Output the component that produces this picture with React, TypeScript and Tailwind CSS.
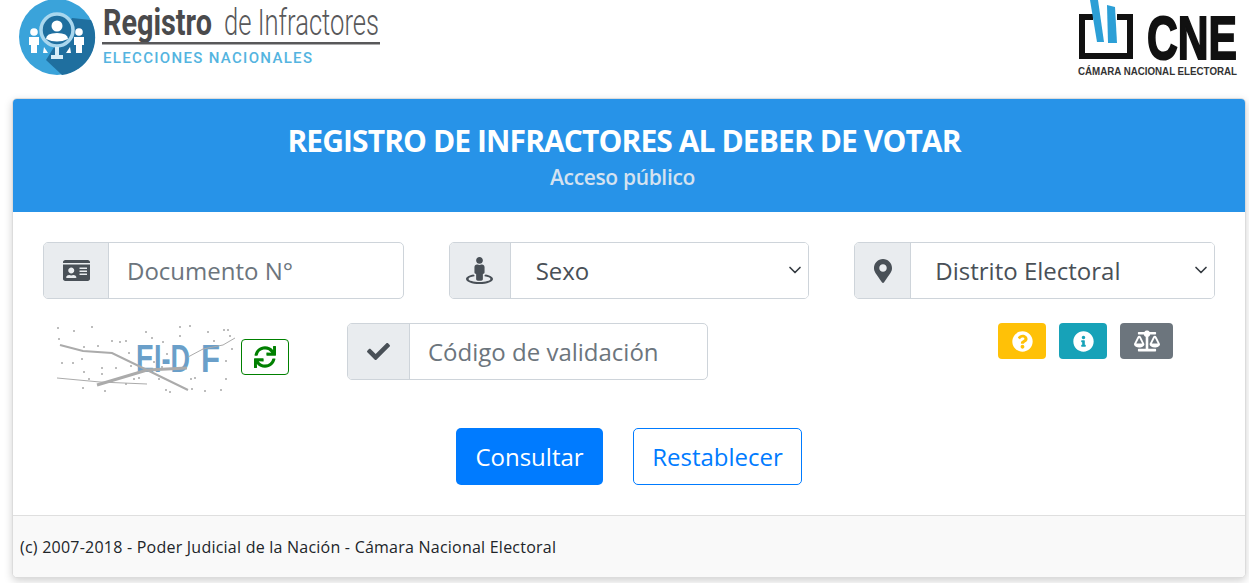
import { ChevronDown } from "lucide-react";
import { FaBalanceScale, FaCheck, FaIdCard, FaInfoCircle, FaMapMarkerAlt, FaQuestionCircle, FaStreetView, FaSync } from "react-icons/fa";
import type { ReactNode } from "react";

const font = { fontFamily: "'Open Sans', sans-serif" };

const captchaDots = [
  [4,4],[20,7],[38,3],[5,15],[30,23],[44,22],[58,17],[66,18],[72,17],[92,8],[98,14],[109,18],[126,3],[136,2],[126,12],[154,8],[170,6],[174,6],[176,12],[160,17],
  [8,39],[19,39],[28,35],[62,44],[75,29],[77,42],[100,38],[108,43],[30,48],[48,44],[85,54],[105,55],[137,55],[141,54],[172,37],[178,25],[172,55],
  [29,64],[80,55],[112,66],[116,68],[138,65],[151,67],[167,66],[51,67],[35,55],[48,50],[113,30],[72,60]
];

function LogoRegistro() {
  return (
    <svg width="385" height="78" viewBox="0 0 385 78" className="block">
      <circle cx="57" cy="37" r="38" fill="#3aa3da" />
      <path d="M72 18 L91 20 A38 38 0 0 1 62 75 L46 60 Z" fill="#1f6f9f" />
      <circle cx="57" cy="30" r="16" fill="#1f6f9f" stroke="#a9d7ee" strokeWidth="3.5" />
      <circle cx="57" cy="26" r="5.5" fill="#fff" />
      <path d="M46 39 Q46 33 57 33 Q68 33 68 39 Q57 44 46 39 Z" fill="#fff" />
      <path d="M55 47 H59 V55 H63 V59 H51 V55 H55 Z" fill="#d6edf8" />
      <circle cx="34" cy="32" r="3.8" fill="#fff" />
      <path d="M29 37 H39 V45 H37 V53 H31 V45 H29 Z" fill="#fff" />
      <circle cx="79" cy="32" r="3.8" fill="#fff" />
      <path d="M74 37 H84 V45 H82 V53 H76 V45 H74 Z" fill="#fff" />
      <path d="M44 47 L48 53 H43 Z" fill="#fff" />
      <path d="M70 47 L71 53 H66 Z" fill="#fff" />
      <text x="103" y="35" fontFamily="Roboto, sans-serif" fontWeight="700" fontSize="37" fill="#4a4a4c" textLength="109" lengthAdjust="spacingAndGlyphs">Registro</text>
      <text x="224" y="35" fontFamily="Roboto, sans-serif" fontWeight="300" fontSize="36" fill="#58585a" textLength="155" lengthAdjust="spacingAndGlyphs">de Infractores</text>
      <rect x="102" y="42" width="278" height="2.5" fill="#58585a" />
      <text x="103" y="63" fontFamily="Roboto, sans-serif" fontWeight="500" fontSize="15" fill="#54b4e0" textLength="209" lengthAdjust="spacing">ELECCIONES NACIONALES</text>
    </svg>
  );
}

function LogoCne() {
  return (
    <svg width="167" height="80" viewBox="0 0 167 80" className="block">
      <path d="M6 14 H20 V20 H12 V53 H54 V20 H44 V14 H60 V59 H6 Z" fill="#111" />
      <path d="M17 0 H25 L31 42 H24 Z" fill="#2c9fd6" />
      <path d="M34 5 L42 7 L44 43 H35 Z" fill="#2c9fd6" />
      <text x="74" y="59" fontFamily="'Liberation Sans', sans-serif" fontWeight="700" fontSize="62" fill="#111" stroke="#111" strokeWidth="2" textLength="90" lengthAdjust="spacingAndGlyphs">CNE</text>
      <text x="5" y="75" fontFamily="'Liberation Sans', sans-serif" fontWeight="700" fontSize="11.5" fill="#333" textLength="159" lengthAdjust="spacingAndGlyphs">CÁMARA NACIONAL ELECTORAL</text>
    </svg>
  );
}

function Captcha() {
  return (
    <svg width="186" height="70" viewBox="0 0 186 70" className="block">
      <g fill="#bdbdbd">
        {captchaDots.map(([x, y]) => (
          <rect key={`${x}-${y}`} x={x} y={y} width="2" height="2" />
        ))}
      </g>
      <text x="83" y="49" fontFamily="'Liberation Sans', sans-serif" fontWeight="700" fontSize="38" fill="#6a9fc9" textLength="54" lengthAdjust="spacingAndGlyphs">EI-D</text>
      <text x="148" y="49" fontFamily="'Liberation Sans', sans-serif" fontWeight="700" fontSize="38" fill="#6a9fc9" textLength="19" lengthAdjust="spacingAndGlyphs">F</text>
      <g fill="none" stroke="#ababab">
        <path d="M7 22 L30 28 L59 30 L94 47 L135 67" strokeWidth="2" />
        <path d="M44 62 L94 47 L134 45" strokeWidth="3" />
        <path d="M4 55 L47 59 L94 61" strokeWidth="1" />
        <path d="M135 34 L150 26 L170 22 L182 15" strokeWidth="1" />
      </g>
    </svg>
  );
}

function Addon({ width, children }: { width: string; children: ReactNode }) {
  return (
    <div className={`${width} shrink-0 h-full flex items-center justify-center bg-[#e9ecef] border-r border-[#ced4da] text-[#495057]`}>
      {children}
    </div>
  );
}

function InputGroup({ icon, addonWidth, placeholder }: { icon: ReactNode; addonWidth: string; placeholder: string }) {
  return (
    <div className="w-[361px] h-[57px] flex items-center rounded-[5px] border border-[#ced4da] bg-white overflow-hidden">
      <Addon width={addonWidth}>{icon}</Addon>
      <input
        placeholder={placeholder}
        className="w-full h-full outline-none pl-[18px] text-[24px] text-[#495057] placeholder:text-[#6c757d]"
        style={font}
      />
    </div>
  );
}

function SelectGroup({ icon, addonWidth, label, selectPad }: { icon: ReactNode; addonWidth: string; label: string; selectPad: string }) {
  return (
    <div className="relative w-[361px] h-[57px] flex items-center rounded-[5px] border border-[#ced4da] bg-white overflow-hidden">
      <Addon width={addonWidth}>{icon}</Addon>
      <select className={`w-full h-full appearance-none bg-white outline-none ${selectPad} text-[24px] text-[#495057]`} style={font}>
        <option>{label}</option>
      </select>
      <ChevronDown size={20} strokeWidth={2} className="absolute right-[3px] top-[17px] text-[#343a40] pointer-events-none" />
    </div>
  );
}

export default function App() {
  return (
    <div className="min-h-[583px] bg-white pl-[12px] pr-[3px]" style={font}>
      {/* Logos */}
      <div className="h-[98px] flex items-start justify-between">
        <div className="-ml-[12px]">
          <LogoRegistro />
        </div>
        <div className="mr-[6px]">
          <LogoCne />
        </div>
      </div>

      <div className="rounded-[5px] border border-[#dcdcdc] shadow-[0_3px_8px_rgba(0,0,0,0.18)] overflow-hidden bg-white">
        {/* Header */}
        <div className="h-[113px] bg-[#2793e8] text-center pt-[21px] pr-[10px]">
          <h1 className="text-[30px] leading-[41px] font-bold tracking-[-0.9px] text-white">REGISTRO DE INFRACTORES AL DEBER DE VOTAR</h1>
          <p className="mt-[2px] text-[21px] leading-[28px] font-semibold tracking-[-0.35px] text-[#d4e2f0] pr-[3px]">Acceso público</p>
        </div>

        {/* Form */}
        <div className="px-[30px] pt-[30px]">
          <div className="flex gap-[45px]">
            <InputGroup icon={<FaIdCard size={27} />} addonWidth="w-[65px]" placeholder="Documento N°" />
            <SelectGroup icon={<FaStreetView size={27} />} addonWidth="w-[61px]" label="Sexo" selectPad="pl-[25px]" />
            <SelectGroup icon={<FaMapMarkerAlt size={24} />} addonWidth="w-[56px]" label="Distrito Electoral" selectPad="pl-[24px]" />
          </div>

          <div className="flex mt-[24px] h-[57px]">
            <div className="w-[304px] flex shrink-0">
              <div className="ml-[10px] w-[188px] shrink-0">
                <Captcha />
              </div>
              <button className="w-[48px] h-[36px] mt-[16px] flex items-center justify-center rounded-[4px] border border-[#008000] text-[#008000]">
                <FaSync size={22} />
              </button>
            </div>
            <InputGroup icon={<FaCheck size={23} />} addonWidth="w-[62px]" placeholder="Código de validación" />
            <div className="flex gap-[13px] ml-[290px]">
              <button className="w-[48px] h-[36px] flex items-center justify-center rounded-[4px] bg-[#ffc107] text-white">
                <FaQuestionCircle size={21} />
              </button>
              <button className="w-[48px] h-[36px] flex items-center justify-center rounded-[4px] bg-[#17a2b8] text-white">
                <FaInfoCircle size={21} />
              </button>
              <button className="w-[53px] h-[36px] flex items-center justify-center rounded-[4px] bg-[#6c757d] text-white">
                <FaBalanceScale size={26} />
              </button>
            </div>
          </div>

          <div className="flex justify-center gap-[30px] mt-[48px]">
            <button className="w-[147px] h-[57px] rounded-[5px] bg-[#007bff] text-white text-[24px]">Consultar</button>
            <button className="w-[169px] h-[57px] rounded-[5px] border border-[#007bff] text-[#007bff] text-[24px]">Restablecer</button>
          </div>
        </div>

        {/* Footer */}
        <div className="mt-[30px] h-[62px] bg-[#f9f9f9] border-t border-[#dfdfdf] flex items-center px-[7px] text-[16px] tracking-[0.23px] text-[#212529]">
          (c) 2007-2018 - Poder Judicial de la Nación - Cámara Nacional Electoral
        </div>
      </div>
    </div>
  );
}
